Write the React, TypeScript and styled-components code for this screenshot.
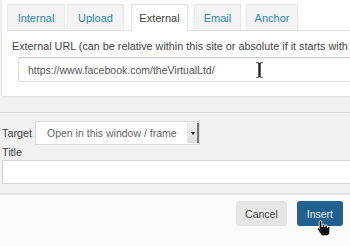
import React from "react";
import styled, {createGlobalStyle} from "styled-components";

const GlobalStyle = createGlobalStyle`
    html, body{
        margin: 0;
        padding: 0;
        background: #f1f1f1;
    }
    body{
        font-family: "Liberation Sans", Arial, sans-serif;
        font-size: 10.5px;
        color: #444;
    }
`

const Page = styled.div`
    position: relative;
    width: 350px;
    height: 246px;
    overflow: hidden;
    display: flex;
    flex-direction: column;
`

const TabPanel = styled.div`
    margin-left: 2px;
    width: 380px;
    height: 96px;
    box-sizing: border-box;
    background: #fff;
    box-shadow: 0 1px 2px rgba(0,0,0,0.08);
    padding-top: 4px;
`

const TabList = styled.div`
    display: flex;
    align-items: flex-end;
    margin-left: 5px;
    height: 26px;
    border-bottom: 1px solid #e2e2e2;
`

const Tab = styled.div<{$active?: boolean; $gap: number; $width: number}>`
    width: ${p => p.$width}px;
    box-sizing: border-box;
    margin-right: ${p => p.$gap}px;
    display: flex;
    align-items: center;
    justify-content: center;
    border: 1px solid ${p => p.$active ? "#e2e2e2" : "#e8e8e8"};
    border-bottom: none;
    background: ${p => p.$active ? "#fff" : "#f4f4f4"};
    color: ${p => p.$active ? "#444" : "#2b87b8"};
    height: ${p => p.$active ? "27px" : "26px"};
    margin-bottom: ${p => p.$active ? "-1px" : "0"};
    font-size: 11px;
`

const TabBody = styled.div`
    padding: 9px 0 0 10px;
`

const Label = styled.div`
    font-size: 10.8px;
    color: #444;
    line-height: 13px;
    white-space: nowrap;
`

const UrlInput = styled.div`
    margin: 4px 0 0 6px;
    height: 25px;
    box-sizing: border-box;
    border: 1px solid #ddd;
    border-top-color: #ccc;
    box-shadow: inset 0 1px 1px rgba(0,0,0,0.05);
    padding-left: 9px;
    display: flex;
    align-items: center;
    color: #555;
    font-size: 10.5px;
`

const Divider = styled.div`
    margin-top: 16px;
    height: 0;
    border-top: 1px solid #d8d8d8;
`

const Fields = styled.div`
    padding: 8px 0 0 2px;
`

const FieldRow = styled.div`
    display: flex;
    align-items: center;
    gap: 3px;
`

const SelectBox = styled.div`
    width: 165px;
    height: 24px;
    box-sizing: border-box;
    display: flex;
    border: 1px solid #dcdcdc;
    background: #fff;
`

const SelectText = styled.span`
    flex: 1;
    padding-left: 11px;
    display: flex;
    align-items: center;
    color: #666;
    font-size: 10.5px;
`

const SelectArrow = styled.span`
    width: 9px;
    margin: 1px 0 1px 0;
    background: linear-gradient(#f2f2f2, #dcdcdc);
    border-right: 2px solid #777;
    border-left: 1px solid #e6e6e6;
    display: flex;
    align-items: center;
    justify-content: center;
    &::after{
        content: "";
        border-left: 2.5px solid transparent;
        border-right: 2.5px solid transparent;
        border-top: 3px solid #111;
    }
`

const TitleLabel = styled(Label)`
    margin-top: 1px;
`

const TitleInput = styled.div`
    margin-top: 1px;
    width: 380px;
    height: 24px;
    box-sizing: border-box;
    background: #fff;
    border: 1px solid #d6d6d6;
`

const Footer = styled.div`
    margin-top: 9px;
    flex: 1;
    background: #fbfbfb;
    border-top: 2px solid #e6e6e6;
    display: flex;
    justify-content: flex-end;
    align-items: flex-start;
    gap: 10px;
    padding: 6px 7px 0 0;
`

const Button = styled.button<{$primary?: boolean}>`
    height: 25px;
    padding: 0 ${p => p.$primary ? 10 : 9}px;
    border: none;
    border-radius: 3px;
    font-family: "Liberation Sans", Arial, sans-serif;
    font-size: 10.5px;
    background: ${p => p.$primary ? "#20608f" : "#e5e5e5"};
    color: ${p => p.$primary ? "#e8f0f6" : "#444"};
`

const Cursor = styled.svg<{$x: number; $y: number}>`
    position: absolute;
    left: ${p => p.$x}px;
    top: ${p => p.$y}px;
`

const tabs = [
    {name: "Internal", width: 58, gap: 2},
    {name: "Upload", width: 57, gap: 7},
    {name: "External", width: 57, gap: 6, active: true},
    {name: "Email", width: 47, gap: 5},
    {name: "Anchor", width: 52, gap: 0},
]

const App = () => {
    return (
        <Page>
            <GlobalStyle/>
            <TabPanel>
                <TabList>
                    {tabs.map(t => (
                        <Tab key={t.name} $active={t.active} $gap={t.gap} $width={t.width}>{t.name}</Tab>
                    ))}
                </TabList>
                <TabBody>
                    <Label>External URL (can be relative within this site or absolute if it starts with</Label>
                    <UrlInput>https://www.facebook.com/theVirtualLtd/</UrlInput>
                </TabBody>
            </TabPanel>
            <Divider/>
            <Fields>
                <FieldRow>
                    <Label>Target</Label>
                    <SelectBox>
                        <SelectText>Open in this window / frame</SelectText>
                        <SelectArrow/>
                    </SelectBox>
                </FieldRow>
                <TitleLabel>Title</TitleLabel>
                <TitleInput/>
            </Fields>
            <Footer>
                <Button>Cancel</Button>
                <Button $primary>Insert</Button>
            </Footer>
            {/* text cursor over the url field */}
            <Cursor $x={255} $y={61} width="9" height="18" viewBox="0 0 9 18">
                <path d="M1 1h2.5l1 1 1-1H8v1.5H6V15.5h2V17H5.5l-1-1-1 1H1v-1.5h2V2.5H1z" fill="#222" stroke="#fff" strokeWidth="0.6"/>
            </Cursor>
            {/* pointer hand over insert */}
            <Cursor $x={316} $y={219} width="16" height="18" viewBox="0 0 16 18">
                <path d="M4.5 1.5c.8 0 1.3.5 1.3 1.3V8l.6-.1V6.3c0-.7.5-1.1 1.1-1.1s1.1.4 1.1 1.1v1.6l.5-.1V6.9c0-.7.5-1.1 1.1-1.1s1.1.4 1.1 1.1V8.5l.4-.1c0-.6.5-1 1.1-1 .6 0 1 .5 1 1.1V13c0 2-1.3 3.8-3.5 3.8H7.6c-1.3 0-2.2-.6-2.9-1.6L1.6 10.6c-.4-.6-.2-1.3.4-1.6.5-.3 1.1-.1 1.5.4L3.2 8.9V2.8c0-.8.5-1.3 1.3-1.3z" fill="#111" stroke="#fff" strokeWidth="0.8"/>
            </Cursor>
        </Page>
    )
}

export default App
